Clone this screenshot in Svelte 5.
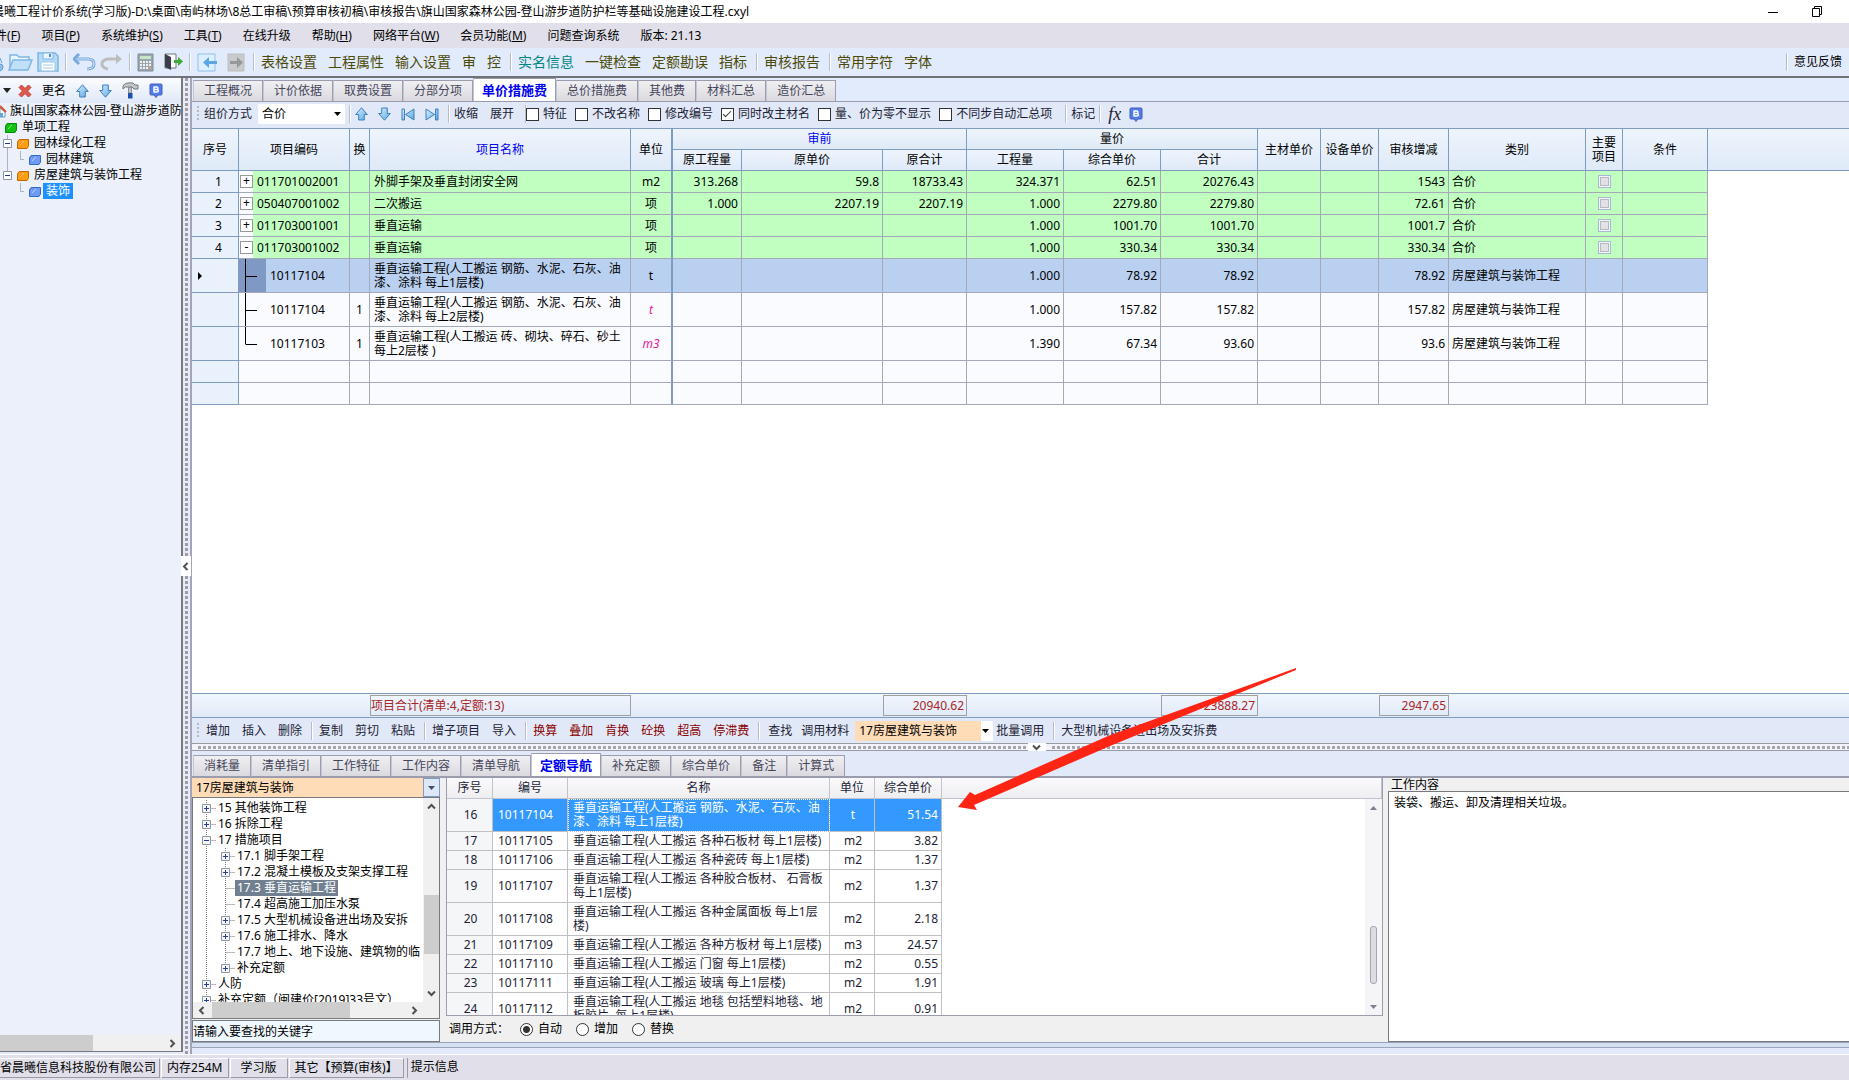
<script>
  const menus = [
    ["文件", "F"], ["项目", "P"], ["系统维护", "S"], ["工具", "T"], ["在线升级"],
    ["帮助", "H"], ["网络平台", "W"], ["会员功能", "M"], ["问题查询系统"], ["版本: 21.13"]
  ];

  const toolGroups = [
    ["表格设置", "工程属性", "输入设置", "审", "控"],
    ["实名信息", "一键检查", "定额勘误", "指标"],
    ["审核报告"],
    ["常用字符", "字体"]
  ];

  const projectTree = [
    { icon: "green", indent: 5, label: "单项工程" },
    { icon: "orange", indent: 17, label: "园林绿化工程", box: true, line: "M7 0V16" },
    { icon: "blue", indent: 29, label: "园林建筑", line: "M7 0V16M20 0V8H24" },
    { icon: "orange", indent: 17, label: "房屋建筑与装饰工程", box: true, line: "M7 0V8" },
    { icon: "blue", indent: 29, label: "装饰", line: "M20 0V8H24", selected: true }
  ];

  const mainTabs = [
    "工程概况", "计价依据", "取费设置", "分部分项", "单价措施费",
    "总价措施费", "其他费", "材料汇总", "造价汇总"
  ];
  let mainTab = $state("单价措施费");

  let options = $state([
    { label: "特征", checked: false },
    { label: "不改名称", checked: false },
    { label: "修改编号", checked: false },
    { label: "同时改主材名", checked: true },
    { label: "量、价为零不显示", checked: false },
    { label: "不同步自动汇总项", checked: false }
  ]);

  const colWidths = [47, 111, 20, 261, 42, 69, 141, 84, 97, 97, 97, 63, 58, 70, 137, 37, 85];

  // nums: 原工程量, 原单价, 原合计, 工程量, 综合单价, 合计, 主材单价, 设备单价, 审核增减
  const items = [
    { no: 1, box: "+", code: "011701002001", name: "外脚手架及垂直封闭安全网", unit: "m2", nums: ["313.268", "59.8", "18733.43", "324.371", "62.51", "20276.43", "", "", "1543"], kind: "合价" },
    { no: 2, box: "+", code: "050407001002", name: "二次搬运", unit: "项", nums: ["1.000", "2207.19", "2207.19", "1.000", "2279.80", "2279.80", "", "", "72.61"], kind: "合价" },
    { no: 3, box: "+", code: "011703001001", name: "垂直运输", unit: "项", nums: ["", "", "", "1.000", "1001.70", "1001.70", "", "", "1001.7"], kind: "合价" },
    { no: 4, box: "-", code: "011703001002", name: "垂直运输", unit: "项", nums: ["", "", "", "1.000", "330.34", "330.34", "", "", "330.34"], kind: "合价" },
    { child: true, current: true, code: "10117104", name: "垂直运输工程(人工搬运 钢筋、水泥、石灰、油\n漆、涂料 每上1层楼)", unit: "t", nums: ["", "", "", "1.000", "78.92", "78.92", "", "", "78.92"], kind: "房屋建筑与装饰工程" },
    { child: true, swap: 1, code: "10117104", name: "垂直运输工程(人工搬运 钢筋、水泥、石灰、油\n漆、涂料 每上2层楼)", unit: "t", nums: ["", "", "", "1.000", "157.82", "157.82", "", "", "157.82"], kind: "房屋建筑与装饰工程" },
    { child: true, last: true, swap: 1, code: "10117103", name: "垂直运输工程(人工搬运 砖、砌块、碎石、砂土\n每上2层楼 )", unit: "m3", nums: ["", "", "", "1.390", "67.34", "93.60", "", "", "93.6"], kind: "房屋建筑与装饰工程" }
  ];

  const editGroups = [
    { items: ["增加", "插入", "删除"] },
    { items: ["复制", "剪切", "粘贴"] },
    { items: ["增子项目", "导入"] },
    { items: ["换算", "叠加", "肯换", "砼换", "超高", "停滞费"], red: true }
  ];

  const subTabs = [
    "消耗量", "清单指引", "工作特征", "工作内容", "清单导航",
    "定额导航", "补充定额", "综合单价", "备注", "计算式"
  ];
  let subTab = $state("定额导航");

  const quotaTree = [
    { box: "+", label: "15 其他装饰工程" },
    { box: "+", label: "16 拆除工程" },
    { box: "-", label: "17 措施项目" },
    { sub: true, box: "+", label: "17.1 脚手架工程" },
    { sub: true, box: "+", label: "17.2 混凝土模板及支架支撑工程" },
    { sub: true, label: "17.3 垂直运输工程", selected: true },
    { sub: true, label: "17.4 超高施工加压水泵" },
    { sub: true, box: "+", label: "17.5 大型机械设备进出场及安拆" },
    { sub: true, box: "+", label: "17.6 施工排水、降水" },
    { sub: true, label: "17.7 地上、地下设施、建筑物的临" },
    { sub: true, last: true, box: "+", label: "补充定额" },
    { box: "+", label: "人防" },
    { box: "+", label: "补充定额（闽建价[2019]33号文）" }
  ];

  const quotas = [
    { no: 16, code: "10117104", name: "垂直运输工程(人工搬运 钢筋、水泥、石灰、油\n漆、涂料 每上1层楼)", unit: "t", price: "51.54", selected: true },
    { no: 17, code: "10117105", name: "垂直运输工程(人工搬运 各种石板材 每上1层楼)", unit: "m2", price: "3.82" },
    { no: 18, code: "10117106", name: "垂直运输工程(人工搬运 各种瓷砖 每上1层楼)", unit: "m2", price: "1.37" },
    { no: 19, code: "10117107", name: "垂直运输工程(人工搬运 各种胶合板材、 石膏板\n每上1层楼)", unit: "m2", price: "1.37" },
    { no: 20, code: "10117108", name: "垂直运输工程(人工搬运 各种金属面板 每上1层\n楼)", unit: "m2", price: "2.18" },
    { no: 21, code: "10117109", name: "垂直运输工程(人工搬运 各种方板材 每上1层楼)", unit: "m3", price: "24.57" },
    { no: 22, code: "10117110", name: "垂直运输工程(人工搬运 门窗 每上1层楼)", unit: "m2", price: "0.55" },
    { no: 23, code: "10117111", name: "垂直运输工程(人工搬运 玻璃 每上1层楼)", unit: "m2", price: "1.91" },
    { no: 24, code: "10117112", name: "垂直运输工程(人工搬运 地毯 包括塑料地毯、地\n板胶片  每上1层楼)", unit: "m2", price: "0.91" }
  ];

  let callMode = $state("自动");
  let keyword = $state("请输入要查找的关键字");
</script>

{#snippet arrowUp()}
  <svg width="13" height="14" viewBox="0 0 13 14"><path d="M6.500 .8 12.300 7.500H9.300V13H3.700V7.500H.7Z" fill="url(#blueFill)" stroke="#3f7fbd" /></svg>
{/snippet}

{#snippet arrowDown()}
  <svg width="13" height="14" viewBox="0 0 13 14"><path d="M6.500 13.200 12.300 6.500H9.300V1H3.700V6.500H.7Z" fill="url(#blueFill)" stroke="#3f7fbd" /></svg>
{/snippet}

{#snippet badge()}
  <svg width="14" height="15" viewBox="0 0 14 15">
    <path d="M2 1H12Q13 1 13 2V11Q13 12 12 12H9L7 14.500 5 12H2Q1 12 1 11V2Q1 1 2 1Z" fill="#4f7df0" stroke="#4a5fae" />
    <path d="M5 3.500V9.500M5 4H7.600Q9 4 9 5.200T7.600 6.500H5M7.600 6.500Q9.400 6.500 9.400 7.800T7.600 9H5" fill="none" stroke="#fff" stroke-width="1.400" />
  </svg>
{/snippet}

{#snippet chevron(dir)}
  <svg width="9" height="9" viewBox="0 0 9 9">
    <path
      d={{ up: "M1 6.500 4.500 3 8 6.500", down: "M1 2.500 4.500 6 8 2.500", left: "M6.500 1 3 4.500 6.500 8", right: "M2.500 1 6 4.500 2.500 8" }[dir]}
      fill="none" stroke="#505050" stroke-width="2" />
  </svg>
{/snippet}

<svg class="defs" width="0" height="0" aria-hidden="true">
  <defs>
    <linearGradient id="blueFill" x1="0" y1="0" x2="1" y2="1">
      <stop offset="0" stop-color="#d9f2ff" />
      <stop offset="1" stop-color="#5aa5e0" />
    </linearGradient>
  </defs>
</svg>

<div class="window">
  <header class="titlebar">
    <span class="title">晨曦工程计价系统(学习版)-D:\桌面\南屿林场\8总工审稿\预算审核初稿\审核报告\旗山国家森林公园-登山游步道防护栏等基础设施建设工程.cxyl</span>
    <button aria-label="最小化"><svg width="10" height="10"><path d="M0 5.500H10" stroke="#000" /></svg></button>
    <button aria-label="还原"><svg width="11" height="11" fill="none" stroke="#000"><path d="M.5 2.500H7.500V10.500H.5ZM2.500 2V.5H9.500V8.500H8" /></svg></button>
  </header>

  <nav class="menubar">
    {#each menus as [label, key]}
      <button>{label}{#if key}(<u>{key}</u>){/if}</button>
    {/each}
  </nav>

  <div class="toolbar">
    <button class="tool cut" aria-label="新建">
      <svg width="4" height="22"><path d="M0 7 2 12M0 20Q3 19 3 16T0 13" fill="#8fc0ec" stroke="#5c9fd8" /></svg>
    </button>
    <button class="tool" aria-label="打开">
      <svg width="25" height="20" viewBox="0 0 25 20"><path d="M2 17V3H9L11 5H21V8" fill="#e8f5fe" stroke="#7fb6e2" stroke-width="1.500" /><path d="M1 18 5 8H24L20 18Z" fill="#bfe0f7" stroke="#7fb6e2" stroke-width="1.500" /></svg>
    </button>
    <button class="tool" aria-label="保存">
      <svg width="22" height="20" viewBox="0 0 22 20"><path d="M1 1H18L21 4V19H1Z" fill="#b5daf6" stroke="#7fb6e2" stroke-width="1.500" /><path d="M6 1H16V7H6Z" fill="#e8f5fe" stroke="#7fb6e2" /><path d="M13 2V5" stroke="#4d8ec4" stroke-width="2" /><path d="M4 10H18V19H4Z" fill="#fff" stroke="#9ac7ea" /><path d="M6 13H16M6 16H16" stroke="#a9c8e2" /></svg>
    </button>
    <i class="sep"></i>
    <button class="tool" aria-label="撤销">
      <svg width="23" height="18" viewBox="0 0 23 18" fill="none"><path d="M6 1 1 6 6 11M2 6H15Q21 6 21 11T14 16" stroke="#78a9df" stroke-width="3" /><path d="M3 6H15Q21 6 21 11T14 16" stroke="#d3e8fb" /></svg>
    </button>
    <button class="tool" aria-label="重做">
      <svg width="23" height="18" viewBox="0 0 23 18" fill="none"><path d="M8 16Q2 15 2 11T8 6H17" stroke="#bdbdbf" stroke-width="3" /><path d="M16 1 22 6 16 11Z" fill="#bdbdbf" /></svg>
    </button>
    <i class="sep"></i>
    <button class="tool calc" aria-label="计算器">
      <svg width="17" height="19" viewBox="0 0 17 19"><path d="M1 1H16V18H1Z" fill="#9ba5ae" stroke="#7f8d99" /><path d="M3 3H14V6H3Z" fill="#c4e6c4" /><path d="M3 9H14M3 12H14M3 15H14" stroke="#eef2f5" stroke-width="2" stroke-dasharray="2 1" /><path d="M12 14H14V16H12Z" fill="#e89b6a" /></svg>
    </button>
    <button class="tool" aria-label="退出">
      <svg width="19" height="18" viewBox="0 0 19 18"><path d="M1 1H12V15H1Z" fill="#fff" stroke="#6f7480" /><path d="M1 1 7 4V17L1 14Z" fill="#3b3d48" /><path d="M10 7H14V4L19 8.500 14 13V10H10Z" fill="#3eab35" /></svg>
    </button>
    <i class="sep"></i>
    <button class="tool" aria-label="上一页">
      <svg width="20" height="19" viewBox="0 0 20 19"><path d="M1 1H18V18H1Z" fill="#dcefff" stroke="#8fc0ea" /><path d="M20 8H12V4L6 9.500 12 15V11H20Z" fill="#5ba6e4" /></svg>
    </button>
    <button class="tool next" aria-label="下一页">
      <svg width="18" height="19" viewBox="0 0 18 19"><path d="M1 1H17V18H1Z" fill="#c9cacc" stroke="#bcbdc0" /><path d="M3 8H10V4L16 9.500 10 15V11H3Z" fill="#96979b" /></svg>
    </button>
    {#each toolGroups as group}
      <i class="sep"></i>
      <div class="tool-group">
        {#each group as label}
          <button class:teal={label === "实名信息"}>{label}</button>
        {/each}
      </div>
    {/each}
    <span class="grow"></span>
    <i class="sep"></i>
    <button class="feedback">意见反馈</button>
  </div>

  <div class="body">
    <aside class="project">
      <div class="project-tools">
        <svg width="8" height="5"><path d="M0 0H8L4 5Z" fill="#222" /></svg>
        <button aria-label="删除节点"><svg width="14" height="14" viewBox="0 0 14 14"><path d="M3.500 1 7 4.500 10.500 1 13 3.500 9.500 7 13 10.500 10.500 13 7 9.500 3.500 13 1 10.500 4.500 7 1 3.500Z" fill="#e2574a" stroke="#b5433a" /></svg></button>
        <button class="rename">更名</button>
        <button aria-label="上移">{@render arrowUp()}</button>
        <button aria-label="下移">{@render arrowDown()}</button>
        <button aria-label="工具">
          <svg width="17" height="17" viewBox="0 0 17 17"><path d="M1 4Q3 0 11 1L13 3H16V7H12L10 5H6Q3 4 1 7Z" fill="#c3c6cb" stroke="#73777f" /><path d="M6.500 5.500H9.500V11H6.500Z" fill="#c3c6cb" stroke="#8a8f98" /><path d="M6 11H10.500V16.500H6Z" fill="#1d4fae" /></svg>
        </button>
        <button aria-label="备注">{@render badge()}</button>
      </div>
      <div class="project-tree">
        <div class="node">
          <svg width="8" height="16"><path d="M0 5 5 9V14H0Z" fill="#fff" stroke="#7393b8" /><path d="M0 3 6 9" stroke="#d3542f" stroke-width="2" /><path d="M0 10H3V14H0Z" fill="#5fa9df" /></svg>
          <span class="root-label">旗山国家森林公园-登山游步道防</span>
        </div>
        {#each projectTree as node}
          <div class="node">
            <svg width={node.indent + 14} height="16">
              {#if node.line}<path d={node.line} transform="translate(.5 .5)" class="dots" />{/if}
              {#if node.box}<path d="M3.500 4.500H11.500V12.500H3.500Z" fill="#fff" stroke="#8b95a5" /><path d="M5 8.500H10" stroke="#27408b" />{/if}
              <g transform="translate({node.indent} 4)">
                <path d="M2 .5H11.500V7L10 9.500H.5V3Z" class={node.icon} />
                <path d="M3 6 7 2" stroke="#fff" opacity=".5" />
              </g>
            </svg>
            <span class="node-label" class:selected={node.selected}>{node.label}</span>
          </div>
        {/each}
      </div>
      <div class="hscroll project-scroll">
        <span class="thumb"></span>
        <span class="grow"></span>
        {@render chevron("right")}
      </div>
    </aside>

    <div class="vsplit">
      <span class="vdots"></span>
      <button aria-label="折叠">{@render chevron("left")}</button>
      <span class="vdots"></span>
    </div>

    <main>
      <div class="tabs" role="tablist">
        {#each mainTabs as tab}
          <button role="tab" aria-selected={tab === mainTab} class:active={tab === mainTab} onclick={() => (mainTab = tab)}>{tab}</button>
        {/each}
      </div>

      <div class="pricebar">
        <i class="grip"></i>
        <label for="mode">组价方式</label>
        <span class="select mode">
          <select id="mode"><option>合价</option></select>
          <svg width="7" height="4"><path d="M0 0H7L3.500 4Z" /></svg>
        </span>
        <i class="sep"></i>
        <div class="moves">
          <button aria-label="上移">{@render arrowUp()}</button>
          <button aria-label="下移">{@render arrowDown()}</button>
          <button aria-label="第一个"><svg width="14" height="13" viewBox="0 0 14 13" fill="url(#blueFill)" stroke="#3f7fbd"><path d="M1 1H3.500V12H1ZM13 1V12L4.500 6.500Z" /></svg></button>
          <button aria-label="最后一个"><svg width="14" height="13" viewBox="0 0 14 13" fill="url(#blueFill)" stroke="#3f7fbd"><path d="M13 1H10.500V12H13ZM1 1V12L9.500 6.500Z" /></svg></button>
        </div>
        <i class="sep"></i>
        <div class="folds">
          <button>收缩</button>
          <button>展开</button>
        </div>
        <i class="sep"></i>
        <div class="options">
          {#each options as option}
            <label><input type="checkbox" bind:checked={option.checked} />{option.label}</label>
          {/each}
        </div>
        <i class="sep"></i>
        <button>标记</button>
        <i class="sep"></i>
        <button class="fx">fx</button>
        <button aria-label="备注">{@render badge()}</button>
      </div>

      <div class="sheet">
        <table>
          <colgroup>
            {#each colWidths as width}
              <col style="width: {width}px" />
            {/each}
            <col />
          </colgroup>
          <thead>
            <tr>
              <th rowspan="2">序号</th>
              <th rowspan="2">项目编码</th>
              <th rowspan="2">换</th>
              <th rowspan="2" class="link">项目名称</th>
              <th rowspan="2" class="thick">单位</th>
              <th colspan="3" class="link">审前</th>
              <th colspan="3">量价</th>
              <th rowspan="2">主材单价</th>
              <th rowspan="2">设备单价</th>
              <th rowspan="2">审核增减</th>
              <th rowspan="2">类别</th>
              <th rowspan="2">主要<br />项目</th>
              <th rowspan="2">条件</th>
              <th rowspan="2" class="rest"></th>
            </tr>
            <tr>
              <th>原工程量</th>
              <th>原单价</th>
              <th>原合计</th>
              <th>工程量</th>
              <th>综合单价</th>
              <th>合计</th>
            </tr>
          </thead>
          <tbody>
            {#each items as item}
              <tr class:bill={!item.child} class:child={item.child} class:current={item.current}>
                <td class="no">
                  {#if item.current}<svg width="4" height="8"><path d="M0 0 4 4 0 8Z" /></svg>{/if}
                  {item.no ?? ""}
                </td>
                <td class="code">
                  <div>
                    {#if item.child}
                      <svg width="27" height="33"><path d="M6.500 0V{item.last ? 17 : 33}M6.500 17.500H18" fill="none" stroke="#000" /></svg>
                    {:else}
                      <span class="strip"><i>{item.box}</i></span>
                    {/if}
                    {item.code}
                  </div>
                </td>
                <td class="mid">{item.swap ?? ""}</td>
                <td class="name">{item.name}</td>
                <td class="mid thick" class:changed={item.swap}>{item.unit}</td>
                {#each item.nums as num}
                  <td class="num">{num}</td>
                {/each}
                <td>{item.kind}</td>
                <td class="mid">{#if !item.child}<input type="checkbox" disabled aria-label="主要项目" />{/if}</td>
                <td></td>
                <td class="rest"></td>
              </tr>
            {/each}
            {#each [1, 2] as blank (blank)}
              <tr>
                <td class="no"></td>
                {#each colWidths.slice(1) as _, i}
                  <td class:thick={i === 3}></td>
                {/each}
                <td class="rest"></td>
              </tr>
            {/each}
          </tbody>
        </table>
      </div>

      <div class="totals">
        <output class="total-name">项目合计(清单:4,定额:13)</output>
        <output class="total-before">20940.62</output>
        <output class="total-after">23888.27</output>
        <output class="total-diff">2947.65</output>
      </div>

      <div class="editbar">
        <i class="grip"></i>
        {#each editGroups as group}
          <div class="edit-group" class:red={group.red}>
            {#each group.items as label}
              <button>{label}</button>
            {/each}
          </div>
          <i class="sep"></i>
        {/each}
        <button>查找</button>
        <label for="lib">调用材料</label>
        <span class="select lib">
          <select id="lib"><option>17房屋建筑与装饰</option></select>
          <svg width="7" height="4"><path d="M0 0H7L3.500 4Z" /></svg>
        </span>
        <button class="batch">批量调用</button>
        <i class="sep"></i>
        <button>大型机械设备进出场及安拆费</button>
      </div>

      <div class="hsplit">
        <span class="hdots"></span>
        <button aria-label="折叠">{@render chevron("down")}</button>
        <span class="hdots"></span>
      </div>

      <div class="tabs sub" role="tablist">
        {#each subTabs as tab}
          <button role="tab" aria-selected={tab === subTab} class:active={tab === subTab} onclick={() => (subTab = tab)}>{tab}</button>
        {/each}
      </div>

      <div class="lower">
        <section class="finder">
          <div class="book">
            <select aria-label="定额库"><option>17房屋建筑与装饰</option></select>
            <span><svg width="7" height="4"><path d="M0 0H7L3.500 4Z" fill="#3e4f66" /></svg></span>
          </div>
          <div class="quota-tree">
            <div class="quota-view">
              <div class="nodes">
                {#each quotaTree as node}
                  {@const x = node.sub ? 32 : 13}
                  <div class="node">
                    <svg width={x + 10} height="16">
                      <path d="M13.500 0V16M{x}.500 8.500H{x + 10}" class="dots" />
                      {#if node.sub}<path d="M32.500 0V{node.last ? 8 : 16}" class="dots" />{/if}
                      {#if node.box}
                        <path d="M{x - 4}.500 4.500h8v8h-8Z" fill="#f4f6fa" stroke="#8b95a5" />
                        <path d="M{x - 2} 8.500h5{node.box === '+' ? `M${x}.5 6v5` : ''}" stroke="#27408b" />
                      {/if}
                    </svg>
                    <span class="node-label" class:picked={node.selected}>{node.label}</span>
                  </div>
                {/each}
              </div>
              <div class="vscroll">
                {@render chevron("up")}
                <span class="thumb"></span>
                {@render chevron("down")}
              </div>
            </div>
            <div class="hscroll quota-scroll">
              {@render chevron("left")}
              <span class="thumb"></span>
              <span class="grow"></span>
              {@render chevron("right")}
            </div>
          </div>
          <input class="keyword" type="text" aria-label="关键字" bind:value={keyword} />
        </section>

        <section class="quota">
          <div class="quota-box">
            <table>
              <colgroup>
                <col style="width: 46px" />
                <col style="width: 75px" />
                <col style="width: 262px" />
                <col style="width: 45px" />
                <col style="width: 67px" />
                <col />
              </colgroup>
              <thead>
                <tr><th>序号</th><th>编号</th><th>名称</th><th>单位</th><th>综合单价</th><th></th></tr>
              </thead>
              <tbody>
                {#each quotas as row}
                  <tr class:selected={row.selected} class:tall={row.name.includes("\n")}>
                    <td class="no">{row.no}</td>
                    <td>{row.code}</td>
                    <td class="name">{row.name}</td>
                    <td class="mid">{row.unit}</td>
                    <td class="num">{row.price}</td>
                    <td class="rest"></td>
                  </tr>
                {/each}
              </tbody>
            </table>
            <div class="slider">
              <svg width="7" height="4"><path d="M0 4H7L3.500 0Z" fill="#7b7f8e" /></svg>
              <span></span>
              <svg width="7" height="4"><path d="M0 0H7L3.500 4Z" fill="#7b7f8e" /></svg>
            </div>
          </div>
          <div class="modes" role="radiogroup" aria-label="调用方式">
            <span>调用方式：</span>
            {#each ["自动", "增加", "替换"] as mode}
              <label><input type="radio" name="call" value={mode} bind:group={callMode} />{mode}</label>
            {/each}
          </div>
        </section>

        <section class="content">
          <label for="work">工作内容</label>
          <textarea id="work">装袋、搬运、卸及清理相关垃圾。</textarea>
        </section>
      </div>
      <div class="frame"></div>
    </main>
  </div>

  <footer>
    <span class="company">省晨曦信息科技股份有限公司</span>
    <span>内存254M</span>
    <span class="edition">学习版</span>
    <span>其它【预算(审核)】</span>
    <span class="hint">提示信息</span>
  </footer>

  <svg class="pointer" width="340" height="144" viewBox="0 0 340 144" aria-hidden="true">
    <path d="M338 1 150 69 17 128 12 125 0 140 19 143 16 138 152 79 338 3Z" fill="#ff2414" />
  </svg>
</div>

<style>
  :global(body) {
    margin: 0;
    overflow: hidden;
  }

  .window {
    position: relative;
    display: flex;
    flex-direction: column;
    height: 100vh;
    overflow: hidden;
    font: 12px/14px "Noto Sans", "Noto Sans CJK SC", sans-serif;
    color: #000;
    background: #e1e0ea;
    white-space: nowrap;
  }

  button,
  select,
  input,
  textarea {
    font: inherit;
    color: inherit;
    margin: 0;
    padding: 0;
    border: none;
    border-radius: 0;
    background: none;
    box-sizing: border-box;
  }

  svg {
    display: block;
    flex: none;
  }

  .defs {
    position: absolute;
  }

  .grow {
    flex: 1;
  }

  .sep {
    flex: none;
    width: 1px;
    height: 18px;
    background: #b9bcc6;
    border-right: 1px solid #fff;
  }

  .grip {
    flex: none;
    width: 2px;
    height: 16px;
    background: repeating-linear-gradient(#b4b6c2 0 2px, transparent 2px 4px);
  }

  .dots {
    fill: none;
    stroke: #777;
    stroke-dasharray: 1 1;
  }

  .titlebar {
    display: flex;
    align-items: center;
    height: 23px;
    flex: none;
    background: #fff;
  }

  .title {
    flex: 1;
    text-indent: -8px;
  }

  .titlebar button {
    margin-right: 26px;
  }

  .titlebar button:first-of-type {
    margin-right: 34px;
  }

  .menubar {
    display: flex;
    align-items: center;
    gap: 21px;
    height: 25px;
    flex: none;
    margin-left: -17px;
  }

  .toolbar {
    display: flex;
    align-items: center;
    height: 28px;
    flex: none;
    background: #e2ebfb;
    border-bottom: 2px solid #6f7276;
  }

  .toolbar .sep {
    margin: 0 6px;
  }

  .toolbar .tool {
    margin-right: 4px;
  }

  .toolbar .tool + .sep {
    margin-left: 2px;
  }

  .toolbar .calc {
    margin-right: 10px;
  }

  .toolbar .next {
    margin: 0 6px;
  }

  .tool-group {
    display: flex;
    gap: 11px;
    margin-right: 3px;
    font-size: 14px;
    line-height: 18px;
    color: #4c4a08;
  }

  .tool-group .teal {
    color: #008585;
  }

  .feedback {
    margin-right: 7px;
  }

  .body {
    display: flex;
    flex: 1;
    min-height: 0;
    background: #e2e9f8;
  }

  .project {
    display: flex;
    flex-direction: column;
    width: 181px;
    flex: none;
    margin-bottom: 2px;
    border-right: 2px solid #77797f;
    border-bottom: 1px solid #77797f;
    background: #ebf0fa;
    overflow: hidden;
  }

  .project-tools {
    display: flex;
    align-items: center;
    gap: 10px;
    height: 25px;
    padding-left: 3px;
    background: linear-gradient(#fafcff, #dfe8f7);
  }

  .project-tools button:first-of-type {
    margin-left: -3px;
  }

  .project-tree {
    flex: 1;
  }

  .node {
    display: flex;
    height: 16px;
    line-height: 16px;
  }

  .root-label {
    padding-left: 2px;
  }

  .node-label {
    padding: 0 3px;
  }

  .selected.node-label {
    background: #1e90ff;
    color: #fff;
  }

  .green {
    fill: #12c112;
    stroke: #0a8a0a;
  }

  .orange {
    fill: #ff9c12;
    stroke: #c26a00;
  }

  .blue {
    fill: #6e9cf5;
    stroke: #3766c4;
  }

  .hscroll {
    display: flex;
    align-items: center;
    height: 16px;
    flex: none;
    padding: 0 4px;
    background: #f0f0f0;
  }

  .hscroll .thumb {
    width: 138px;
    height: 100%;
    margin-left: 6px;
    background: #cdcdcd;
  }

  .project-scroll .thumb {
    width: 93px;
    margin-left: -4px;
  }

  .quota-scroll {
    padding-right: 20px;
  }

  .vsplit {
    display: flex;
    flex-direction: column;
    width: 7px;
    flex: none;
    border-right: 1px solid #a3a5ba;
    background: #ebeaf8;
  }

  .vdots {
    flex: 1;
    margin-left: 2px;
    width: 3px;
    background: repeating-linear-gradient(#9d9da6 0 3px, transparent 3px 5px);
  }

  .vsplit button {
    height: 20px;
    margin: 0 -2px;
    background: #fff;
  }

  main {
    display: flex;
    flex-direction: column;
    flex: 1;
    min-width: 0;
    border-left: 1px solid #a3a5ba;
  }

  .tabs {
    display: flex;
    align-items: flex-end;
    height: 23px;
    flex: none;
    padding-left: 1px;
    border-bottom: 1px solid #9b9cae;
    background: #e2ebfb;
  }

  .tabs button {
    height: 21px;
    padding: 0 10px;
    border: 1px solid #9b9cae;
    border-bottom: none;
    border-left-color: #c5c6d2;
    background: linear-gradient(#f0f0f3, #d9d9df);
    color: #45455a;
  }

  .tabs .active {
    height: 23px;
    padding: 0 8px;
    background: #fff;
    color: #0000f0;
    font-size: 13px;
    font-weight: bold;
  }

  .pricebar,
  .editbar {
    display: flex;
    align-items: center;
    flex: none;
    padding-left: 5px;
    color: #1d1d35;
    background: #e1e9f8;
  }

  .pricebar {
    height: 24px;
    padding-bottom: 2px;
  }

  .pricebar .sep {
    margin: 0 4px;
  }

  .pricebar > label {
    margin: 0 6px 0 5px;
  }

  .select {
    position: relative;
    display: flex;
    align-items: center;
    height: 20px;
    background: #fff;
  }

  .select svg {
    position: absolute;
    right: 4px;
    pointer-events: none;
  }

  select {
    appearance: none;
    width: 100%;
    height: 100%;
    padding-left: 4px;
    color: #000;
  }

  .mode {
    width: 87px;
  }

  .moves {
    display: flex;
    gap: 10px;
    padding-right: 5px;
  }

  .folds {
    display: flex;
    gap: 12px;
    padding-right: 7px;
  }

  .options {
    display: flex;
    gap: 8px;
    margin: 0 9px 0 -5px;
  }

  .options label {
    display: flex;
    align-items: center;
    gap: 4px;
  }

  .options input {
    appearance: none;
    width: 13px;
    height: 13px;
    border: 1px solid #333;
    background: #fff;
  }

  .options input:checked::after {
    content: "";
    display: block;
    width: 7px;
    height: 3px;
    margin: 2px 0 0 1px;
    border: solid #333;
    border-width: 0 0 1px 1px;
    transform: rotate(-45deg);
  }

  .pricebar .fx {
    margin: 0 8px 0 3px;
    font: italic 18px/18px "Liberation Serif", serif;
  }

  table {
    width: 100%;
    table-layout: fixed;
    border-collapse: separate;
    border-spacing: 0;
  }

  th,
  td {
    box-sizing: border-box;
    padding: 0;
    font-weight: normal;
  }

  .sheet {
    flex: 1;
    min-height: 0;
    overflow: hidden;
    border-top: 1px solid #7f9bc0;
    background: #fff;
  }

  .sheet th {
    height: 21px;
    border-right: 1px solid #7f9bc0;
    border-bottom: 1px solid #7f9bc0;
    background: linear-gradient(#eef4fc, #dfeaf8);
  }

  .sheet th.rest {
    border-right: none;
  }

  .sheet .link {
    color: #0000f0;
  }

  .sheet td {
    height: 22px;
    padding: 0 3px;
    border-right: 1px solid #a4a9b8;
    border-bottom: 1px solid #a4a9b8;
    background: #fafbfe;
  }

  .sheet td.name {
    padding-left: 4px;
  }

  .sheet .thick {
    border-right: 2px solid #7f9bc0;
  }

  .sheet .bill td {
    background: #c0ffc0;
  }

  .sheet .child td {
    height: 34px;
  }

  .sheet .current td {
    background: #bad0f1;
  }

  .sheet tr .no {
    position: relative;
    padding-left: 10px;
    text-align: center;
    background: #e9f2fc;
    border-color: #7f9bc0;
  }

  .no svg {
    position: absolute;
    left: 6px;
    top: 13px;
  }

  .sheet tr .rest {
    border: none;
    background: #fff;
  }

  .sheet thead tr .rest {
    border-bottom: 1px solid #7f9bc0;
    background: linear-gradient(#eef4fc, #dfeaf8);
  }

  .sheet td.code {
    padding: 0;
  }

  .code div {
    display: flex;
    align-items: center;
    gap: 4px;
  }

  .current .code svg {
    background: #8098c4;
  }

  .strip {
    width: 14px;
    height: 21px;
    padding: 4px 0 0 1px;
    box-sizing: border-box;
    background: #fafbfe;
  }

  .strip i {
    display: block;
    width: 11px;
    height: 11px;
    border: 1px solid #999;
    background: #fff;
    font-style: normal;
    line-height: 10px;
    text-align: center;
  }

  .mid {
    text-align: center;
  }

  .num {
    text-align: right;
  }

  .name {
    white-space: pre;
  }

  .changed {
    color: #f0149c;
    font-style: italic;
  }

  .sheet input {
    appearance: none;
    display: block;
    width: 13px;
    height: 13px;
    margin: 0 auto;
    border: 1px solid #a9b8d4;
    background: #e2e2e6;
    box-shadow: inset 0 0 0 1px #f2f6fc, inset 0 0 0 2px #b8b8c0;
  }

  .totals {
    display: grid;
    grid-template-columns: 47px 111px 20px 261px 42px 69px 141px 84px 97px 97px 97px 63px 58px 70px 1fr;
    height: 25px;
    flex: none;
    box-sizing: border-box;
    padding: 1px 0;
    border: solid #7f9bc0;
    border-width: 1px 0;
    background: linear-gradient(#f0f6fd, #e0eaf8);
    color: #a92626;
  }

  .totals output {
    padding-right: 2px;
    border: 1px solid #a0a0a0;
    line-height: 19px;
    text-align: right;
  }

  .totals .total-name {
    grid-column: 4;
    text-align: left;
  }

  .total-before {
    grid-column: 8;
  }

  .total-after {
    grid-column: 11;
  }

  .total-diff {
    grid-column: 14;
  }

  .editbar {
    height: 25px;
  }

  .editbar .sep {
    margin: 0 6px 0 9px;
  }

  .edit-group {
    display: flex;
    gap: 12px;
  }

  .grip + .edit-group {
    margin-left: 7px;
  }

  .edit-group.red + .sep {
    margin-right: 8px;
  }

  .red {
    color: #8b0000;
  }

  .editbar label {
    margin: 0 6px 0 9px;
  }

  .lib {
    width: 138px;
  }

  .lib select {
    margin-right: 12px;
    background: #ffdcb8;
  }

  .batch {
    margin-left: 3px;
  }

  .hsplit {
    display: flex;
    height: 8px;
    flex: none;
    background: #f2f2f8;
  }

  .hdots {
    flex: 836;
    border: solid #9a9aa2;
    border-width: 1px 0;
    background: repeating-linear-gradient(90deg, #a6a6ae 0 3px, transparent 3px 5px) 6px 2px / 100% 3px no-repeat;
  }

  .hdots:last-child {
    flex: 803;
  }

  .hsplit button {
    width: 18px;
    padding: 0 4px;
    background: #fff;
  }

  .tabs.sub {
    height: 25px;
    border-bottom-width: 2px;
    background: #e2e9f8;
  }

  .lower {
    display: flex;
    flex: none;
    height: 264px;
    background: #f0f0f0;
  }

  .finder {
    display: flex;
    flex-direction: column;
    width: 248px;
  }

  .book {
    display: flex;
    height: 19px;
    flex: none;
    background: #ffdcb8;
  }

  .book select {
    flex: 1;
  }

  .book span {
    display: flex;
    align-items: center;
    justify-content: center;
    width: 15px;
    border: 1px solid #7f9bc0;
    background: #dce8f8;
  }

  .quota-tree {
    display: flex;
    flex-direction: column;
    flex: 1;
    min-height: 0;
    border: 1px solid #77797f;
    background: #f0f0f0;
  }

  .quota-view {
    display: flex;
    flex: 1;
    min-height: 0;
  }

  .nodes {
    flex: 1;
    min-width: 0;
    padding-top: 2px;
    overflow: hidden;
    background: #fff;
  }

  .nodes .node-label {
    padding: 0 2px;
  }

  .picked {
    background: #708090;
    color: #fff;
  }

  .vscroll {
    display: flex;
    flex-direction: column;
    align-items: center;
    width: 16px;
    padding: 4px 0;
    background: #f0f0f0;
  }

  .vscroll .thumb {
    width: 15px;
    height: 59px;
    margin: auto 0 35px;
    background: #cdcdcd;
  }

  .keyword {
    height: 22px;
    flex: none;
    margin-top: 1px;
    border: 1px solid #77797f;
    background: #f0f8ff;
  }

  .quota {
    display: flex;
    flex-direction: column;
    flex: 1;
    min-width: 0;
    margin-left: 6px;
  }

  .quota-box {
    position: relative;
    flex: 1;
    min-height: 0;
    overflow: hidden;
    border: solid #9b9cae;
    border-width: 0 1px 1px;
    background: #fff;
  }

  .quota th {
    height: 21px;
    border-right: 1px solid #c3c3d0;
    border-bottom: 1px solid #c3c3d0;
    background: linear-gradient(#fafafc, #eeeef2);
    color: #1d1d35;
  }

  .quota td {
    height: 19px;
    padding: 0 3px 0 5px;
    border-right: 1px solid #c0c0c4;
    border-bottom: 1px solid #c0c0c4;
    color: #1d1d35;
  }

  .quota .tall td {
    height: 33px;
  }

  .quota td.no {
    text-align: center;
    background: #f5f6f8;
  }

  .quota td.rest {
    border: none;
  }

  .quota .selected td:not(.no, .rest) {
    background: #3399ff;
    color: #fff;
  }

  .quota .selected .name {
    outline: 1px dotted #fff;
    outline-offset: -1px;
  }

  /* scrollbar of the quota list, laid over the empty last column */
  .slider {
    position: absolute;
    top: 21px;
    right: 0;
    bottom: 0;
    display: flex;
    flex-direction: column;
    align-items: center;
    width: 17px;
    padding: 7px 0 6px;
    box-sizing: border-box;
    background: #f5f5f8;
  }

  .slider span {
    width: 7px;
    height: 58px;
    margin: auto 0 21px;
    box-sizing: border-box;
    border: 1px solid #a3a5b2;
    border-radius: 3px;
    background: #dcdde3;
  }

  .modes {
    display: flex;
    align-items: center;
    height: 26px;
    flex: none;
    padding-left: 3px;
  }

  .modes span {
    width: 71px;
  }

  .modes label {
    display: flex;
    align-items: center;
    gap: 5px;
    margin-right: 14px;
  }

  .modes input {
    appearance: none;
    width: 13px;
    height: 13px;
    border: 1px solid #333;
    border-radius: 50%;
    background: #fff;
  }

  .modes input:checked {
    background: radial-gradient(#333 0 3px, #fff 4px);
  }

  .content {
    display: flex;
    flex-direction: column;
    width: 461px;
    margin-left: 5px;
  }

  .content label {
    height: 13px;
    padding-left: 3px;
    line-height: 13px;
  }

  .content textarea {
    flex: 1;
    padding: 4px 5px;
    border: 1px solid #77797f;
    border-right: none;
    background: #fff;
    resize: none;
  }

  .frame {
    height: 4px;
    flex: none;
    margin-bottom: 6px;
    border: solid #9aa4b8;
    border-width: 1px 0;
    background: #d5e0f2;
  }

  footer {
    display: flex;
    align-items: center;
    gap: 1px;
    height: 25px;
    flex: none;
    border-top: 1px solid #fff;
    background: #e1e0ea;
  }

  footer span {
    height: 20px;
    padding: 0 5px;
    box-sizing: border-box;
    border: 1px solid #fff;
    border-right-color: #9a9aa4;
    border-bottom-color: #9a9aa4;
    line-height: 18px;
  }

  footer .company {
    padding: 0 3px 0 0;
    border-left: none;
  }

  footer .edition {
    padding: 0 10px;
  }

  footer .hint {
    margin-left: 2px;
    padding-left: 3px;
    border: none;
    border-left: 1px solid #9a9aa4;
  }

  /* red arrow drawn across both panes towards the picked quota */
  .pointer {
    position: absolute;
    left: 958px;
    top: 667px;
    pointer-events: none;
  }
</style>
